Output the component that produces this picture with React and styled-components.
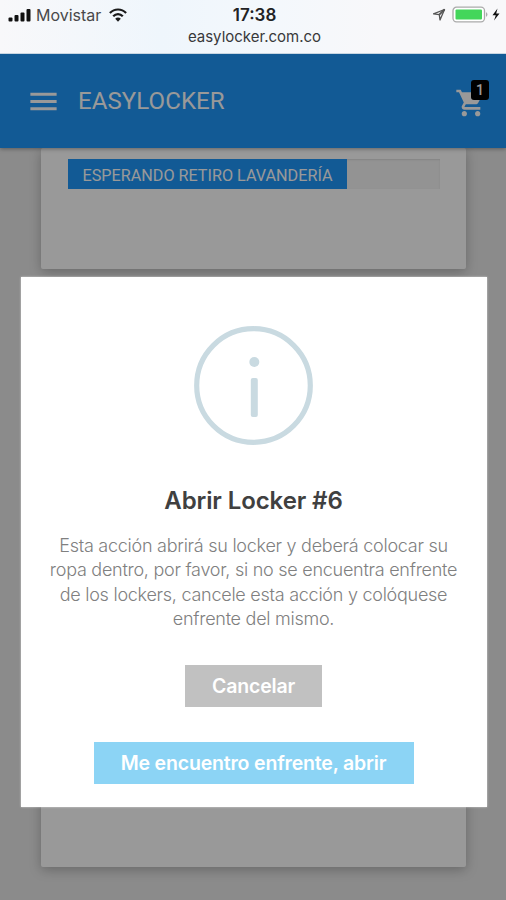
import React, {Component} from 'react'
import styled, {createGlobalStyle} from "styled-components";
import {MdMenu, MdShoppingCart} from "react-icons/md";


const GlobalStyle = createGlobalStyle`
  * {
    box-sizing: border-box;
  }
  body {
    margin: 0;
    overflow: hidden;
  }
`;

const Screen = styled.div`
  width: 506px;
  height: 900px;
  display: flex;
  flex-direction: column;
  font-family: Inter, "Liberation Sans", sans-serif;
`;

const StatusBar = styled.div`
  height: 54px;
  flex: none;
  padding: 5px 5px 0 8px;
  background: linear-gradient(90deg, #f8f8fa 0%, #eff6fc 32%, #f4f8fc 55%, #f8f8fa 75%);
  border-bottom: 1px solid #c8d6e2;
`;

const StatusRow = styled.div`
  display: grid;
  grid-template-columns: 1fr auto 1fr;
  align-items: center;
  height: 20px;
`;

const Side = styled.div`
  display: flex;
  align-items: center;
  justify-content: ${props => props.$end ? 'flex-end' : 'flex-start'};
`;

const Carrier = styled.span`
  margin: 0 8px 0 5px;
  font-size: 16px;
  color: #48484a;
`;

const Time = styled.span`
  font-size: 17px;
  font-weight: 600;
  color: #222224;
`;

const Site = styled.div`
  height: 24px;
  line-height: 24px;
  text-align: center;
  font-size: 15px;
  color: #38383a;
`;

const Page = styled.div`
  position: relative;
  flex: 1;
  display: flex;
  flex-direction: column;
  overflow: hidden;
  background-color: #e8e8e8;
`;

const Header = styled.div`
  z-index: 1;
  height: 94px;
  flex: none;
  display: flex;
  align-items: center;
  padding: 0 20px 0 26px;
  background-color: #1e96f8;
  color: #fff;
  font-family: Roboto, sans-serif;
  box-shadow: 0 1px 4px rgba(0, 0, 0, 0.35);
`;

const Brand = styled.div`
  flex: 1;
  margin-left: 17px;
  font-size: 24px;
  letter-spacing: 0.1px;
`;

const Cart = styled.div`
  position: relative;
  height: 32px;
  margin: 3px -1px 0 0;
`;

const Badge = styled.div`
  position: absolute;
  top: -7px;
  right: -2px;
  width: 18px;
  height: 20px;
  border-radius: 3px;
  background-color: #000;
  font-size: 14px;
  font-weight: 500;
  line-height: 21px;
  text-align: center;
`;

const Content = styled.div`
  flex: 1;
  padding: 0 40px 33px 41px;
  display: flex;
  flex-direction: column;
  gap: 22px;
`;

const Card = styled.div`
  height: ${props => props.$height};
  flex: ${props => props.$height ? 'none' : 1};
  padding: 11px 26px 11px 27px;
  background-color: #fff;
  border-radius: 2px;
  box-shadow: 0 3px 12px rgba(0, 0, 0, 0.25);
`;

const Progress = styled.div`
  height: 30px;
  background-color: #f5f5f5;
  box-shadow: inset 0 1px 2px rgba(0, 0, 0, 0.1);
`;

const Bar = styled.div`
  width: 75%;
  height: 100%;
  background-color: #1e96f8;
  color: #fff;
  font-family: Roboto, sans-serif;
  font-size: 16.2px;
  line-height: 34px;
  text-align: center;
  white-space: nowrap;
`;

const Overlay = styled.div`
  position: absolute;
  inset: 0;
  z-index: 2;
  padding: 223px 19px 0 21px;
  background-color: rgba(0, 0, 0, 0.4);
`;

const Modal = styled.div`
  height: 530px;
  padding: 49px 1px 23px 0;
  display: flex;
  flex-direction: column;
  align-items: center;
  background-color: #fff;
  box-shadow: 0 0 2px rgba(255, 255, 255, 0.6);
`;

const Title = styled.h2`
  margin: 37px 0 0;
  height: 36px;
  line-height: 36px;
  font-size: 24px;
  font-weight: 600;
  letter-spacing: -0.1px;
  color: #404040;
  white-space: nowrap;
`;

const Text = styled.p`
  margin: 15px 0 34px;
  font-size: 18px;
  font-weight: 300;
  line-height: 24.3px;
  letter-spacing: -0.26px;
  text-align: center;
  white-space: pre-line;
  color: #808080;
`;

const Button = styled.button`
  width: ${props => props.$width};
  height: ${props => props.$primary ? '43px' : '42px'};
  margin-bottom: ${props => props.$primary ? 0 : '35px'};
  padding: 0;
  border: none;
  background-color: ${props => props.$primary ? '#8cd4f5' : '#c1c1c1'};
  color: #fff;
  font-family: inherit;
  font-size: 19.5px;
  font-weight: 600;
  letter-spacing: -0.18px;
  white-space: nowrap;
`;

const Signal = () => (
  <svg width="23" height="13" viewBox="0 0 23 13" fill="#111">
    <rect x="0.5" y="8.5" width="4" height="4" rx="1"/>
    <rect x="6.5" y="6" width="4" height="6.5" rx="1"/>
    <rect x="12.5" y="3.5" width="4" height="9" rx="1"/>
    <rect x="18.5" y="0" width="4" height="12.5" rx="1"/>
  </svg>
)

const Wifi = () => (
  <svg width="18" height="14" viewBox="0 0 18 14" fill="none" stroke="#1a1a1a" strokeWidth="2.2">
    <path d="M0.9 5.1C5.4 0.3 12.6 0.3 17.1 5.1"/>
    <path d="M4.2 8.3C6.9 5.4 11.1 5.4 13.8 8.3"/>
    <path d="M9 13.8L6.2 10.8C7.8 9.2 10.2 9.2 11.8 10.8Z" fill="#1a1a1a" stroke="none"/>
  </svg>
)

const Power = () => (
  <svg width="68" height="18" viewBox="0 0 68 18">
    <path d="M0.5 7.8L11.5 3.5L7 14L6.3 8.6Z" fill="none" stroke="#555" strokeWidth="1.3" strokeLinejoin="round"/>
    <path d="M11.5 3.5L6.3 8.6" stroke="#555" strokeWidth="1.8"/>
    <rect x="20" y="1.2" width="31.5" height="14.6" rx="3.5" fill="#fff" stroke="#aaa" strokeWidth="1.3"/>
    <rect x="22.5" y="3.5" width="26.5" height="10" rx="1" fill="#43d65b"/>
    <path d="M53 6Q56 8.5 53 11Z" fill="#aaa"/>
    <path d="M64.5 2.5L59.5 9.2H62.8L61 14.5L66.5 7.5H63.2Z" fill="#111"/>
  </svg>
)

const InfoIcon = () => (
  <svg width="120" height="120" viewBox="0 0 120 120" style={{flex: 'none'}}>
    <circle cx="59.5" cy="59.5" r="56.8" fill="none" stroke="#c9dae1" strokeWidth="5.2"/>
    <circle cx="60.3" cy="36" r="5" fill="#c9dae1"/>
    <rect x="56.8" y="52" width="7" height="39" rx="2" fill="#c9dae1"/>
  </svg>
)

class App extends Component{

render(){
  return (
    <Screen>
      <GlobalStyle/>
      <StatusBar>
        <StatusRow>
          <Side>
            <Signal/>
            <Carrier>Movistar</Carrier>
            <Wifi/>
          </Side>
          <Time>17:38</Time>
          <Side $end><Power/></Side>
        </StatusRow>
        <Site>easylocker.com.co</Site>
      </StatusBar>
      <Page>
        <Header>
          <MdMenu size={35}/>
          <Brand>EASYLOCKER</Brand>
          <Cart>
            <MdShoppingCart size={32}/>
            <Badge>1</Badge>
          </Cart>
        </Header>
        <Content>
          <Card $height="121px">
            <Progress>
              <Bar>ESPERANDO RETIRO LAVANDERÍA</Bar>
            </Progress>
          </Card>
          <Card/>
        </Content>
        <Overlay>
          <Modal>
            <InfoIcon/>
            <Title>Abrir Locker #6</Title>
            <Text>
              {'Esta acción abrirá su locker y deberá colocar su\nropa dentro, por favor, si no se encuentra enfrente\nde los lockers, cancele esta acción y colóquese\nenfrente del mismo.'}
            </Text>
            <Button $width="137px">Cancelar</Button>
            <Button $primary $width="320px">Me encuentro enfrente, abrir</Button>
          </Modal>
        </Overlay>
      </Page>
    </Screen>
  );
}
}
export default App;
